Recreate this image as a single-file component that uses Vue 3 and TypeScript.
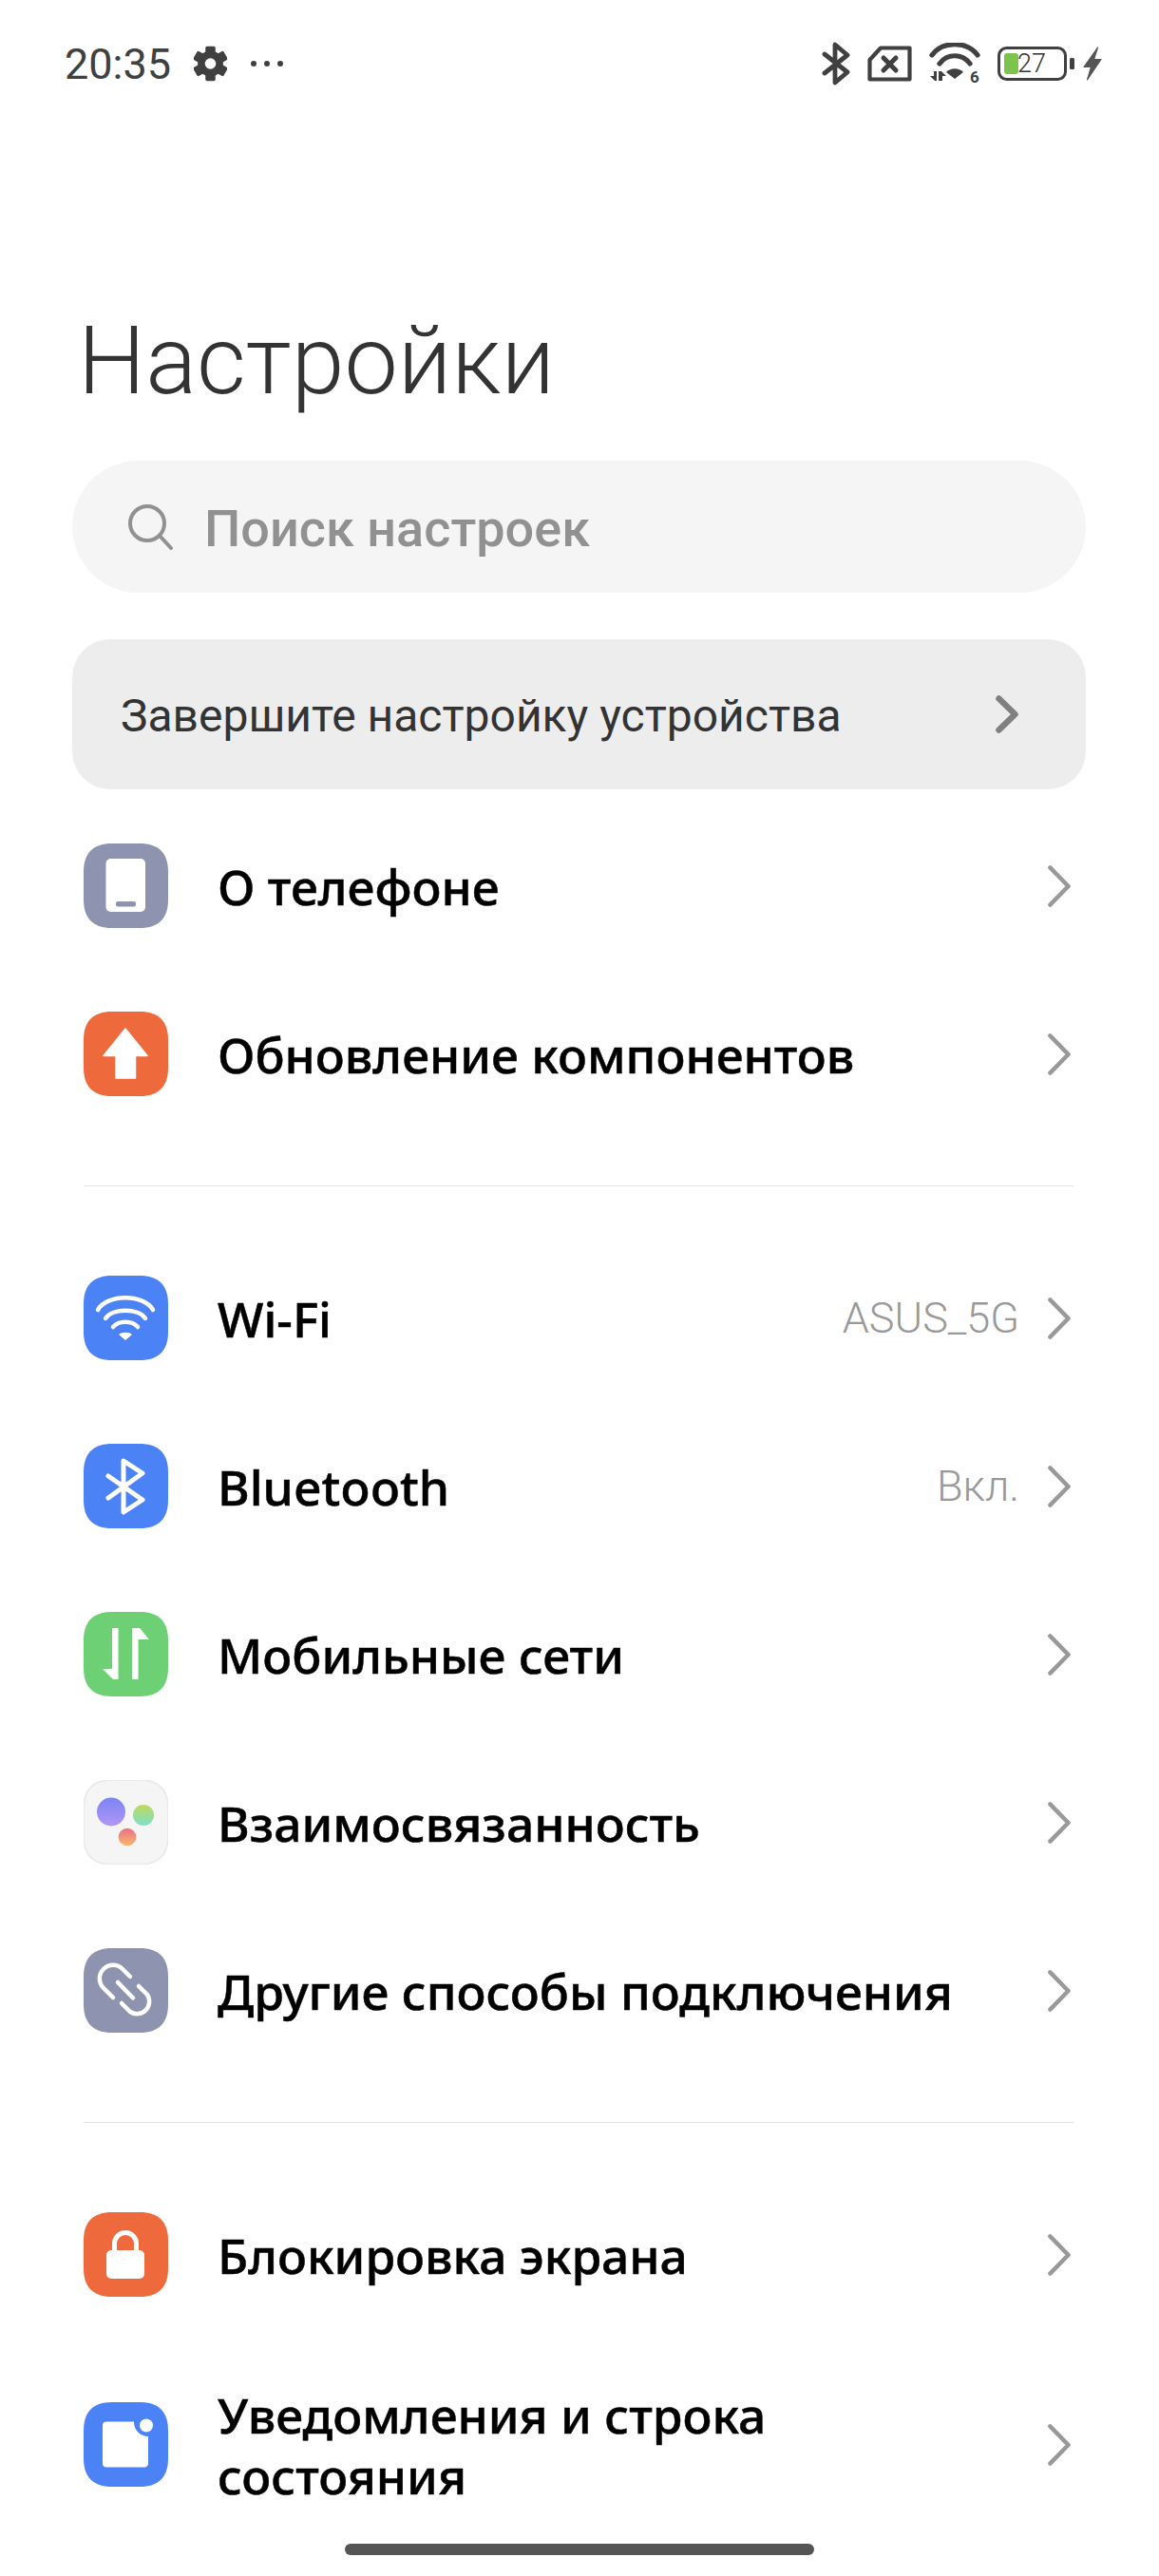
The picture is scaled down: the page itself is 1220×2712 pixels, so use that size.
<script setup lang="ts">
interface Row {
  id: string
  label: string
  value?: string
  tall?: boolean
}

const groups: Row[][] = [
  [
    { id: 'phone', label: 'О телефоне' },
    { id: 'update', label: 'Обновление компонентов' },
  ],
  [
    { id: 'wifi', label: 'Wi-Fi', value: 'ASUS_5G' },
    { id: 'bluetooth', label: 'Bluetooth', value: 'Вкл.' },
    { id: 'mobile', label: 'Мобильные сети' },
    { id: 'connect', label: 'Взаимосвязанность' },
    { id: 'link', label: 'Другие способы подключения' },
  ],
  [
    { id: 'lock', label: 'Блокировка экрана' },
    { id: 'notify', label: 'Уведомления и строка состояния', tall: true },
  ],
]

const squircle = 'M30 0H59C79 0 89 10 89 30V59C89 79 79 89 59 89H30C10 89 0 79 0 59V30C0 10 10 0 30 0Z'

const iconFill: Record<string, string> = {
  phone: '#8e94b0',
  update: '#ee6a3c',
  wifi: '#4b82f5',
  bluetooth: '#4b82f5',
  mobile: '#6dd074',
  connect: '#f5f5f5',
  link: '#8e94b0',
  lock: '#ee6a3c',
  notify: '#4b82f5',
}

const gearTeeth = [0, 60, 120, 180, 240, 300]
</script>

<template>
  <div class="page">
    <header class="status">
      <div class="status-left">
        <span class="time">20:35</span>
        <svg class="gear" width="35" height="38" viewBox="0 0 30 32.500">
          <circle cx="15" cy="16.250" r="11.500" fill="#404040" />
          <rect
            v-for="a in gearTeeth"
            :key="a"
            x="10.500"
            y="0.500"
            width="9"
            height="8"
            rx="1.500"
            fill="#404040"
            :transform="`rotate(${a} 15 16.250)`"
          />
          <circle cx="15" cy="16.250" r="5" fill="#fff" />
        </svg>
        <svg class="dots" width="36" height="8" viewBox="0 0 36 8">
          <circle cx="4" cy="4" r="3" fill="#404040" />
          <circle cx="18" cy="4" r="3" fill="#404040" />
          <circle cx="32" cy="4" r="3" fill="#404040" />
        </svg>
      </div>
      <div class="status-right">
        <svg width="30" height="46" viewBox="0 0 30 46" fill="none" stroke="#404040" stroke-width="4.800" stroke-linecap="round" stroke-linejoin="round">
          <path d="M3 13L27 32L14 43V3L27 14L3 33" />
        </svg>
        <svg width="47" height="38" viewBox="0 0 47 38" fill="none" stroke="#404040" stroke-width="4.200" stroke-linejoin="round">
          <path d="M14 2.500H44.500V35.500H2.500V15Z" />
          <path d="M17 13L30 26M30 13L17 26" stroke-width="5" stroke-linecap="round" />
        </svg>
        <svg class="status-wifi" width="54" height="50" viewBox="0 0 54 50">
          <g fill="none" stroke="#404040" stroke-linecap="round" stroke-width="5.200">
            <path d="M3 13C14 -2 40 -2 51 13" />
            <path d="M11 22C19 11 35 11 43 22" />
          </g>
          <path d="M18 31C23 26 31 26 36 31L27 38Z" fill="#404040" />
          <path d="M1 35H5V30H8V40H6ZM10 30H13L18 35H14V40H10Z" fill="#404040" />
          <text x="43" y="42" class="wifi-six">6</text>
        </svg>
        <svg class="battery" width="81" height="36" viewBox="0 0 81 36">
          <rect x="1.500" y="1.500" width="70" height="33" rx="8" fill="none" stroke="#404040" stroke-width="3" />
          <rect x="7" y="7" width="15" height="22" rx="3" fill="#7cc44c" />
          <text x="21" y="27" class="battery-text">27</text>
          <rect x="76" y="12" width="5" height="12" rx="1.500" fill="#404040" />
        </svg>
        <svg class="bolt" width="20" height="36" viewBox="0 0 20 36">
          <path d="M15.500 1L1 21.500H8.500L4.500 35L19 13.500H11.500L15.500 1Z" fill="#555" stroke="#555" stroke-width="1.200" stroke-linejoin="round" />
        </svg>
      </div>
    </header>

    <h1 class="title">Настройки</h1>

    <div class="search">
      <svg width="47" height="48" viewBox="0 0 47 48" fill="none" stroke="#919191" stroke-width="4" stroke-linecap="round">
        <circle cx="20" cy="20" r="18" />
        <path d="M33 33L45 46" />
      </svg>
      <span class="search-text">Поиск настроек</span>
    </div>

    <div class="banner">
      <span class="banner-text">Завершите настройку устройства</span>
      <svg width="24" height="40" viewBox="0 0 24 40" fill="none" stroke="#808080" stroke-width="6.500" stroke-linecap="round" stroke-linejoin="round">
        <path d="M3.500 3.500L20.500 20L3.500 36.500" />
      </svg>
    </div>

    <template v-for="(group, g) in groups" :key="g">
      <div v-if="g > 0" class="divider" />
      <section class="group">
        <div v-for="row in group" :key="row.id" class="row" :class="{ tall: row.tall }">
          <svg class="icon" width="89" height="89" viewBox="0 0 89 89">
            <path :d="squircle" :fill="iconFill[row.id]" />
            <template v-if="row.id === 'phone'">
              <rect x="23.500" y="16" width="41.500" height="56" rx="5" fill="#fff" />
              <rect x="34" y="61" width="21" height="5.500" rx="2" fill="#8e94b0" />
            </template>
            <path v-else-if="row.id === 'update'" d="M44 18L67 46.500H54.500V70H34V46.500H21Z" fill="#fff" stroke="#fff" stroke-width="1.500" stroke-linejoin="round" />
            <template v-else-if="row.id === 'wifi'">
              <g fill="none" stroke="#fff" stroke-width="4.500" stroke-linecap="round">
                <path d="M15 36C25 19 63 19 73 36" />
                <path d="M23 45C30 34 58 34 65 45" />
                <path d="M31 54C37 47 51 47 57 54" />
              </g>
              <path d="M37 62C40 59 48 59 51 62L44 68Z" fill="#fff" />
            </template>
            <path v-else-if="row.id === 'bluetooth'" d="M26 34L62 59L42 72V18L62 31L26 57" fill="none" stroke="#fff" stroke-width="5" stroke-linecap="round" stroke-linejoin="round" />
            <template v-else-if="row.id === 'mobile'">
              <path d="M30 17H36.500V71H31L20 60H30Z" fill="#fff" />
              <path d="M51 71H57.500V29H69L59 17H51Z" fill="#fff" />
            </template>
            <template v-else-if="row.id === 'connect'">
              <defs>
                <linearGradient id="dot-a" x1="0" y1="0" x2="0" y2="1">
                  <stop offset="0" stop-color="#7a84f6" />
                  <stop offset="1" stop-color="#b396f5" />
                </linearGradient>
                <linearGradient id="dot-b" x1="0" y1="0" x2="0" y2="1">
                  <stop offset="0" stop-color="#bfd95e" />
                  <stop offset="1" stop-color="#7ce0c8" />
                </linearGradient>
                <linearGradient id="dot-c" x1="0" y1="0" x2="0" y2="1">
                  <stop offset="0" stop-color="#ee6f84" />
                  <stop offset="1" stop-color="#f8b96f" />
                </linearGradient>
              </defs>
              <path :d="squircle" fill="none" stroke="#e8e8e8" stroke-width="1.500" />
              <circle cx="29" cy="33.500" r="15" fill="url(#dot-a)" />
              <circle cx="63" cy="37" r="11" fill="url(#dot-b)" />
              <circle cx="46" cy="60" r="9.300" fill="url(#dot-c)" />
            </template>
            <g v-else-if="row.id === 'link'" fill="none" stroke="#fff" stroke-width="4.500" stroke-linecap="round">
              <path d="M31 52L21 42A14 14 0 0 1 41 22L49 30" />
              <path d="M58 40L67 49A13 13 0 0 1 49 67L40 58" />
              <path d="M36 36L52 52.500" />
            </g>
            <template v-else-if="row.id === 'lock'">
              <rect x="24" y="40" width="40" height="30" rx="5" fill="#fff" />
              <path d="M32.500 44V33A11.500 11.500 0 0 1 55.500 33V44" fill="none" stroke="#fff" stroke-width="5" />
            </template>
            <template v-else-if="row.id === 'notify'">
              <path d="M24 20.500H53A15 15 0 0 0 68 36V64A4 4 0 0 1 64 68.500H24A4 4 0 0 1 20 64.500V24.500A4 4 0 0 1 24 20.500Z" fill="#fff" />
              <circle cx="66" cy="24.500" r="7" fill="#fff" />
            </template>
          </svg>
          <span class="label">{{ row.label }}</span>
          <span v-if="row.value" class="value">{{ row.value }}</span>
          <svg class="chevron" width="24" height="44" viewBox="0 0 24 44" fill="none" stroke="#999" stroke-width="4.600" stroke-linecap="round" stroke-linejoin="round">
            <path d="M2.500 2.500L21.500 22L2.500 41.500" />
          </svg>
        </div>
      </section>
    </template>

    <div class="home-bar" />
  </div>
</template>

<style>
html,
body {
  margin: 0;
  background: #fff;
}
</style>

<style scoped>
.page {
  position: relative;
  width: 1220px;
  height: 2712px;
  overflow: hidden;
  background: #fff;
  font-family: Roboto, "Noto Sans", sans-serif;
}

.status {
  display: flex;
  align-items: center;
  justify-content: space-between;
  height: 134px;
  padding: 0 60px 0 68px;
  box-sizing: border-box;
}

.status-left,
.status-right {
  display: flex;
  align-items: center;
}

.time {
  font-size: 45px;
  color: #404040;
}

.gear {
  margin-left: 24px;
}

.dots {
  margin-left: 24px;
}

.status-right {
  gap: 18px;
}

.status-wifi {
  margin-top: 6px;
}

.wifi-six {
  font-family: Roboto, sans-serif;
  font-size: 17px;
  font-weight: 700;
  fill: #404040;
}

.battery-text {
  font-family: Roboto, sans-serif;
  font-size: 27px;
  font-weight: 300;
  fill: #333;
}

.bolt {
  margin-left: -9px;
}

.title {
  margin: 186px 0 0 82px;
  height: 165px;
  font-size: 100.500px;
  line-height: 120px;
  font-weight: 300;
  color: #333;
}

.search {
  display: flex;
  align-items: center;
  gap: 33px;
  height: 139px;
  margin: 0 77px 0 76px;
  padding-left: 59px;
  box-sizing: border-box;
  background: #f5f5f5;
  border-radius: 70px;
}

.search-text {
  margin-top: 3px;
  font-size: 54px;
  font-weight: 500;
  color: #919191;
}

.banner {
  display: flex;
  align-items: center;
  justify-content: space-between;
  height: 158px;
  margin: 49px 77px 0 76px;
  padding: 0 71px 0 51px;
  box-sizing: border-box;
  background: #ededed;
  border-radius: 40px;
  font-size: 48px;
  color: #333;
}

.banner-text {
  margin-top: 2px;
}

.group {
  margin-top: 50px;
}

.banner + .group {
  margin-top: 13px;
}

.divider {
  height: 1px;
  margin: 50px 90px 0 88px;
  background: #e3e3e3;
}

.row {
  display: flex;
  align-items: center;
  min-height: 177px;
  padding: 0 93px 0 88px;
  box-sizing: border-box;
}

.row.tall {
  min-height: 223px;
}

.icon {
  flex: none;
  margin-right: 52px;
}

.label {
  flex: 1;
  max-width: 800px;
  font-family: "Noto Sans", sans-serif;
  font-size: 51.500px;
  line-height: 64px;
  font-weight: 500;
  -webkit-text-stroke: 0.5px #000;
  color: #000;
}

.tall .label {
  max-width: 640px;
}

.value {
  margin-left: auto;
  margin-right: 30px;
  font-size: 45px;
  font-weight: 300;
  color: #999;
}

.chevron {
  flex: none;
  margin-left: auto;
}

.value + .chevron {
  margin-left: 0;
}

.home-bar {
  position: absolute;
  left: 363px;
  bottom: 22px;
  width: 494px;
  height: 12px;
  border-radius: 6px;
  background: #555;
}
</style>
